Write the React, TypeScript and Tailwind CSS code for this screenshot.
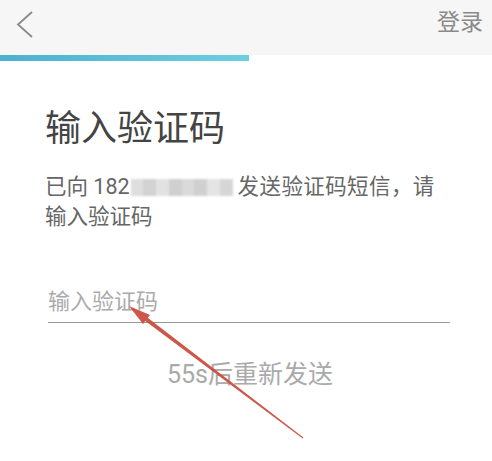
import React from "react";

const font = { fontFamily: "Roboto, 'Noto Sans CJK SC', sans-serif" };

export default function App() {
  const blocks = ["#dedede", "#d2d2d2", "#e2e2e2", "#cfcfcf", "#dadada", "#d0d0d0", "#e4e4e4", "#d6d6d6"];
  return (
    <div className="relative w-[492px] h-[461px] bg-white overflow-hidden" style={font}>
      <div className="h-[55px] bg-[#f6f6f6] flex items-center justify-between pl-[16px] pr-[9px]">
        <svg width="18" height="28" viewBox="0 0 18 28" className="mt-[-6px]">
          <polyline points="16,1 2,13.5 16,26" fill="none" stroke="#8a8a8a" strokeWidth="1.8" />
        </svg>
        <span className="text-[23px] leading-[30px] text-[#8a8a8a] mt-[-10px]">登录</span>
      </div>
      <div className="h-[6px] w-[249px] bg-gradient-to-r from-[#4eb0cf] to-[#6ccfe0]" />
      <div className="px-[45px]">
        <div className="mt-[49px] text-[36px] leading-[38px] text-[#444]">输入验证码</div>
        <div className="mt-[24px] text-[21.5px] leading-[30px] text-[#666]">
          <div className="flex items-center whitespace-nowrap">
            <span>已向 182</span>
            <span className="inline-flex h-[17px] w-[102px] ml-[1px] mr-[5px] blur-[1px]">
              {blocks.map((c, i) => (
                <span key={i} className="flex-1 h-full" style={{ backgroundColor: c }} />
              ))}
            </span>
            <span className="tracking-[0.4px]">发送验证码短信，请</span>
          </div>
          <div>输入验证码</div>
        </div>
        <div className="mt-[57px] mr-[-3px] ml-[3px] border-b border-[#9a9a9a] h-[34px] text-[22px] leading-[26px] text-[#aaa]">
          输入验证码
        </div>
        <div className="mt-[37px] text-center text-[25px] leading-[30px] text-[#aaa] pl-[8px]">55s后重新发送</div>
      </div>
      <svg className="absolute inset-0 pointer-events-none" width="492" height="461" viewBox="0 0 492 461">
        <polygon
          points="129,306 150,315 147.7,317.7 303.4,437.6 302.7,438.4 145.3,320.9 143,324"
          fill="#c9493a"
          opacity="0.92"
        />
      </svg>
    </div>
  );
}
